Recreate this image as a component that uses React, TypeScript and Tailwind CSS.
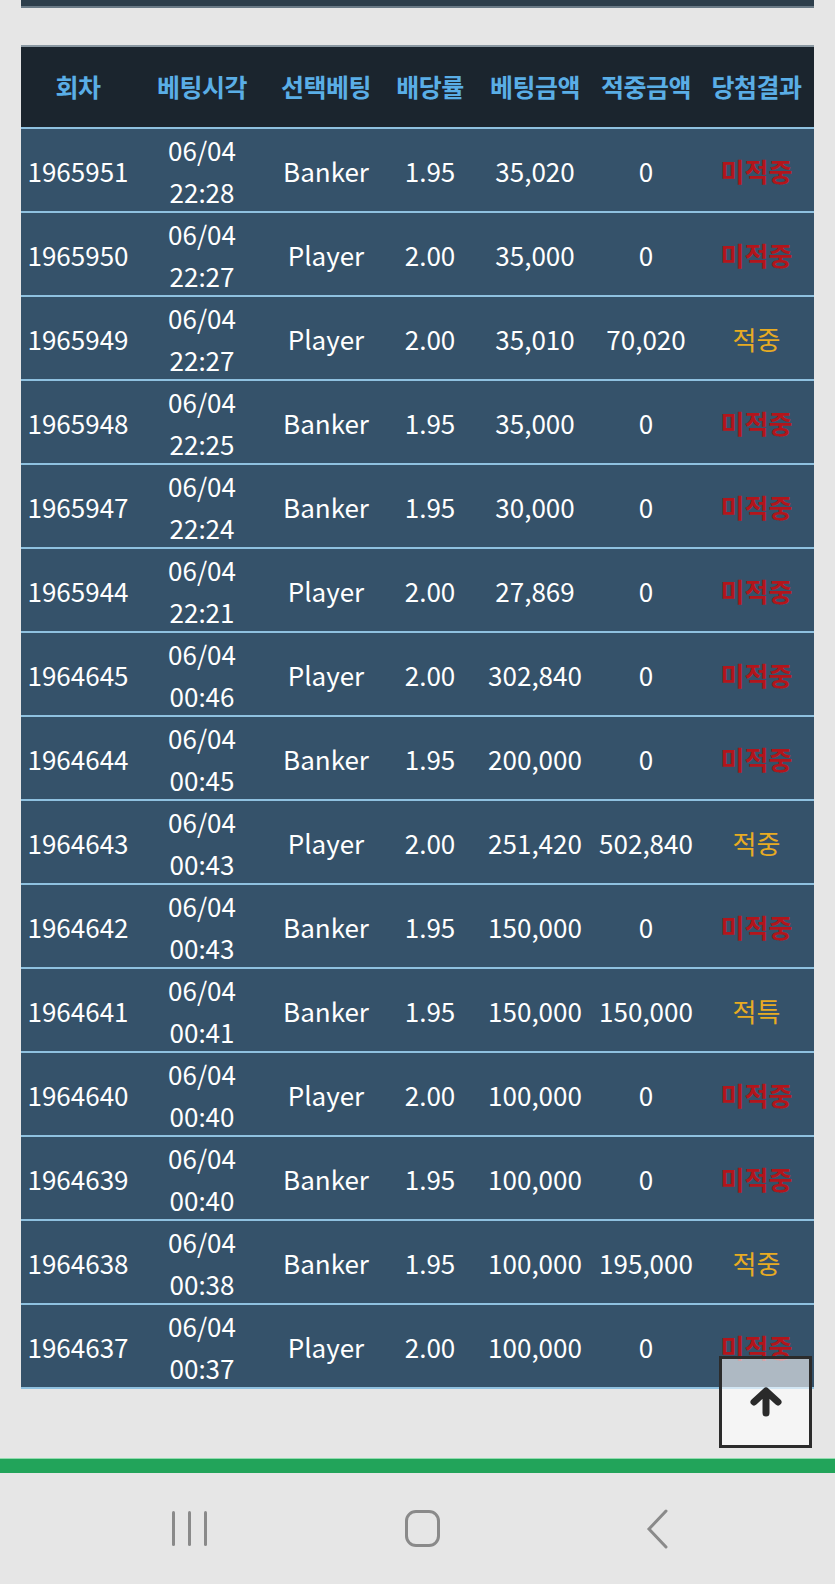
type Row = {
  round: string
  date: string
  time: string
  pick: string
  odds: string
  bet: string
  win: string
  result: "미적중" | "적중" | "적특"
}

const rows: Row[] = [
  { round: "1965951", date: "06/04", time: "22:28", pick: "Banker", odds: "1.95", bet: "35,020", win: "0", result: "미적중" },
  { round: "1965950", date: "06/04", time: "22:27", pick: "Player", odds: "2.00", bet: "35,000", win: "0", result: "미적중" },
  { round: "1965949", date: "06/04", time: "22:27", pick: "Player", odds: "2.00", bet: "35,010", win: "70,020", result: "적중" },
  { round: "1965948", date: "06/04", time: "22:25", pick: "Banker", odds: "1.95", bet: "35,000", win: "0", result: "미적중" },
  { round: "1965947", date: "06/04", time: "22:24", pick: "Banker", odds: "1.95", bet: "30,000", win: "0", result: "미적중" },
  { round: "1965944", date: "06/04", time: "22:21", pick: "Player", odds: "2.00", bet: "27,869", win: "0", result: "미적중" },
  { round: "1964645", date: "06/04", time: "00:46", pick: "Player", odds: "2.00", bet: "302,840", win: "0", result: "미적중" },
  { round: "1964644", date: "06/04", time: "00:45", pick: "Banker", odds: "1.95", bet: "200,000", win: "0", result: "미적중" },
  { round: "1964643", date: "06/04", time: "00:43", pick: "Player", odds: "2.00", bet: "251,420", win: "502,840", result: "적중" },
  { round: "1964642", date: "06/04", time: "00:43", pick: "Banker", odds: "1.95", bet: "150,000", win: "0", result: "미적중" },
  { round: "1964641", date: "06/04", time: "00:41", pick: "Banker", odds: "1.95", bet: "150,000", win: "150,000", result: "적특" },
  { round: "1964640", date: "06/04", time: "00:40", pick: "Player", odds: "2.00", bet: "100,000", win: "0", result: "미적중" },
  { round: "1964639", date: "06/04", time: "00:40", pick: "Banker", odds: "1.95", bet: "100,000", win: "0", result: "미적중" },
  { round: "1964638", date: "06/04", time: "00:38", pick: "Banker", odds: "1.95", bet: "100,000", win: "195,000", result: "적중" },
  { round: "1964637", date: "06/04", time: "00:37", pick: "Player", odds: "2.00", bet: "100,000", win: "0", result: "미적중" },
]

const headers = ["회차", "베팅시각", "선택베팅", "배당률", "베팅금액", "적중금액", "당첨결과"]

const grid = "grid grid-cols-[114px_134px_114px_94px_116px_106px_115px]"

export default function App() {
  return (
    <div
      className="relative h-[1584px] overflow-hidden bg-[#e6e6e6]"
      style={{ fontFamily: '"Noto Sans CJK KR", "Noto Sans", sans-serif' }}
    >
      {/* bottom edge of the panel above */}
      <div className="mx-[21px] h-[8px] border-b-2 border-[#6a7a86] bg-[#2d3e4b]" />

      <div className="mx-[21px] mt-[37px]">
        <div className={`${grid} h-[82px] items-center border-t-2 border-[#8a98a2] bg-[#1b252e] text-[25px] font-bold tracking-[-0.5px] text-[#5aaee6]`}>
          {headers.map((h) => (
            <div key={h} className="whitespace-nowrap text-center">
              {h}
            </div>
          ))}
        </div>

        {rows.map((r) => (
          <div
            key={r.round}
            className={`${grid} h-[84px] items-center border-t-2 border-[#8fc1e0] bg-[#35526a] text-[26px] leading-[42px] text-white`}
          >
            <div className="text-center">{r.round}</div>
            <div className="flex flex-col items-center">
              <span>{r.date}</span>
              <span>{r.time}</span>
            </div>
            <div className="text-center">{r.pick}</div>
            <div className="text-center">{r.odds}</div>
            <div className="text-center">{r.bet}</div>
            <div className="text-center">{r.win}</div>
            <div
              className={`text-center ${
                r.result === "미적중" ? "font-bold text-[#b3151b]" : "text-[#e8ab22]"
              }`}
            >
              {r.result}
            </div>
          </div>
        ))}
        <div className="h-[2px] bg-[#8fc1e0]" />
      </div>

      <div className="mt-[69px] h-[15px] border-t border-[#8fdcae] bg-[#22a45a]" />

      {/* android nav bar */}
      <div className="flex h-[111px] items-center pl-[159px]">
        <div className="flex w-[60px] justify-center gap-[13px]">
          <span className="h-[35px] w-[3px] rounded bg-[#8a8a8a]" />
          <span className="h-[35px] w-[3px] rounded bg-[#8a8a8a]" />
          <span className="h-[35px] w-[3px] rounded bg-[#8a8a8a]" />
        </div>
        <div className="ml-[173px] flex w-[60px] justify-center">
          <span className="h-[37px] w-[35px] rounded-[11px] border-[3px] border-[#8a8a8a]" />
        </div>
        <div className="ml-[175px] flex w-[60px] justify-center">
          <svg width="24" height="40" viewBox="0 0 24 40">
            <path d="M21 2 L4 20 L21 38" fill="none" stroke="#8a8a8a" strokeWidth="3" strokeLinecap="round" />
          </svg>
        </div>
      </div>

      <button className="absolute left-[719px] top-[1356px] flex h-[92px] w-[93px] items-center justify-center border-[3px] border-[#2b2b2b] bg-white/60">
        <svg width="34" height="30" viewBox="0 0 34 30">
          <path
            d="M5 15 L17 4 L29 15 M17 5 L17 26"
            fill="none"
            stroke="#2a2a2a"
            strokeWidth="7"
            strokeLinecap="round"
            strokeLinejoin="round"
          />
        </svg>
      </button>
    </div>
  )
}
